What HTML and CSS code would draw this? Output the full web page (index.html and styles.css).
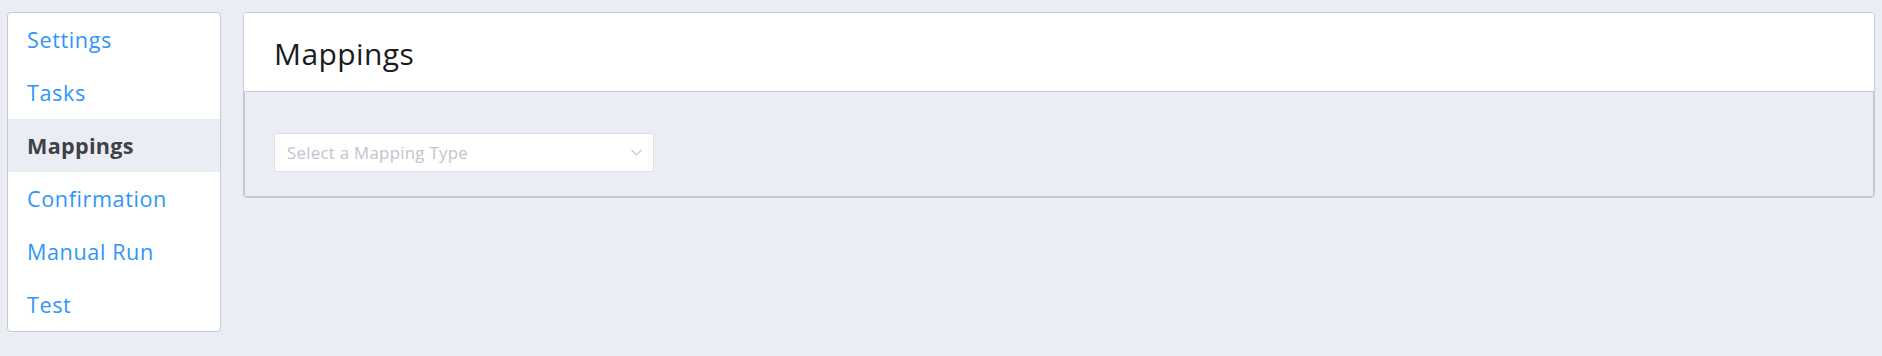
FILE: index.html
```html
<!DOCTYPE html>
<html>
<head>
<meta charset="utf-8">
<link rel="stylesheet" href="styles.css">
</head>
<body>
<div class="layout">
  <nav class="sidebar">
    <a class="nav-item">Settings</a>
    <a class="nav-item">Tasks</a>
    <a class="nav-item active">Mappings</a>
    <a class="nav-item">Confirmation</a>
    <a class="nav-item">Manual Run</a>
    <a class="nav-item">Test</a>
  </nav>
  <section class="card">
    <header class="card-header">
      <h1 class="title">Mappings</h1>
    </header>
    <div class="card-body">
      <div class="select">
        <span class="placeholder">Select a Mapping Type</span>
        <svg class="chevron" width="11" height="7" viewBox="0 0 11 7"><path d="M0.5 0.8 L5.5 5.8 L10.5 0.8" fill="none" stroke="#c0c4cc" stroke-width="1.2"/></svg>
      </div>
    </div>
  </section>
</div>
</body>
</html>
```
FILE: styles.css
```css
html, body {
  margin: 0;
  padding: 0;
  background: #eaedf3;
  font-family: "Open Sans", "Liberation Sans", sans-serif;
}
.layout {
  display: flex;
  align-items: flex-start;
  gap: 22px;
  padding: 12px 7px;
}
.sidebar {
  width: 212px;
  flex: none;
  background: #fff;
  border: 1px solid #c6c9dd;
  border-radius: 4px;
  display: flex;
  flex-direction: column;
  overflow: hidden;
}
.nav-item {
  height: 53px;
  display: flex;
  align-items: center;
  padding-left: 19px;
  font-size: 21.6px;
  letter-spacing: 0.6px;
  color: #2f95fb;
  cursor: pointer;
}
.nav-item.active {
  background: #eaedf3;
  color: #3e4248;
  font-weight: 700;
  letter-spacing: 0.3px;
}
.card {
  flex: 1;
  border: 1px solid #c6c9dd;
  border-radius: 4px;
  overflow: hidden;
  background: #eaedf3;
}
.card-header {
  background: #fff;
  border-bottom: 1px solid #c6c9dd;
  padding: 21px 30px 17px;
}
.title {
  margin: 0;
  font-size: 30px;
  line-height: 40px;
  font-weight: 400;
  color: #1b1b1f;
  letter-spacing: 0.4px;
}
.card-body {
  border-left: 1px solid #c3c6da;
  border-right: 1px solid #c3c6da;
  border-bottom: 1px solid #c3c6da;
  padding: 41px 29px 24px;
}
.select {
  width: 378px;
  height: 37px;
  background: #fff;
  border: 1px solid #dcdfe6;
  border-radius: 2px;
  display: flex;
  align-items: center;
  justify-content: space-between;
  padding: 0 11px 0 12px;
  box-sizing: content-box;
  width: 355px;
}
.placeholder {
  font-size: 16.8px;
  color: #c0c4cc;
  letter-spacing: 0.3px;
}
.chevron {
  display: block;
}
```
